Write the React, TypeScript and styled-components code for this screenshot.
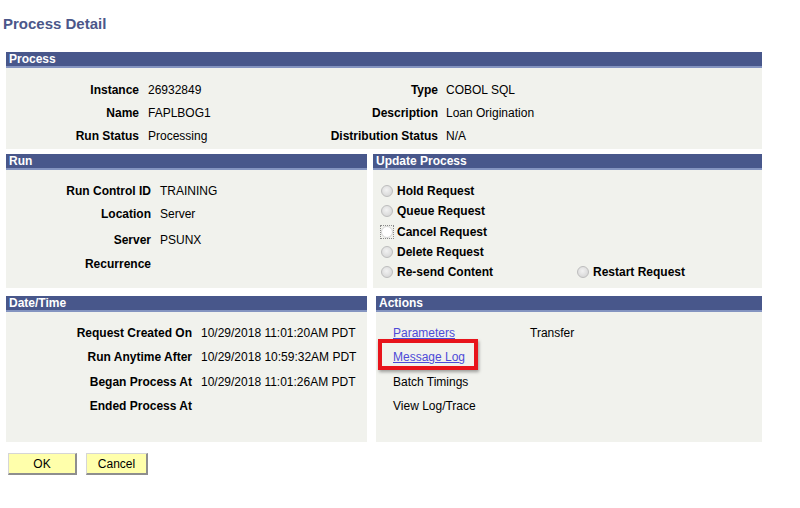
import React from 'react';
import styled, { createGlobalStyle } from 'styled-components';

const GlobalStyle = createGlobalStyle`
    html, body {
        margin: 0;
        padding: 0;
        background: #ffffff;
    }
    body {
        font-family: Arial, "Liberation Sans", sans-serif;
        font-size: 12px;
        color: #000000;
    }
`;

const Page = styled.div`
    width: 800px;
    height: 508px;
    padding-top: 15px;
    box-sizing: border-box;
`;

const Title = styled.h1`
    margin: 0 0 0 3px;
    height: 18px;
    line-height: 18px;
    font-size: 15px;
    font-weight: bold;
    color: #4b578a;
`;

const Content = styled.div`
    width: 756px;
    margin: 19px 0 0 6px;
`;

const Section = styled.section`
    display: flex;
    flex-direction: column;
    background: #f1f2ed;
`;

const Header = styled.header`
    height: 14px;
    line-height: 14px;
    padding-left: 3px;
    background: #48578b;
    border-bottom: 2px solid #8494c0;
    color: #ffffff;
    font-weight: bold;
    font-size: 12px;
`;

const Columns = styled.div<{ $gap: number }>`
    display: grid;
    grid-template-columns: 361px 1fr;
    column-gap: ${p => p.$gap}px;
    margin-top: ${p => p.$gap === 6 ? 5 : 8}px;
`;

const Body = styled.div<{ $height: number; $pt: number; $pl?: number }>`
    height: ${p => p.$height}px;
    padding: ${p => p.$pt}px 0 0 ${p => p.$pl ?? 0}px;
    box-sizing: border-box;
`;

const ProcessGrid = styled.div`
    display: grid;
    grid-template-columns: 133px 150px 149px 1fr;
    grid-auto-rows: 23px;
    align-items: center;
`;

const Label = styled.span<{ $width?: number }>`
    ${p => p.$width ? `width: ${p.$width}px; flex: none;` : ''}
    text-align: right;
    font-weight: bold;
    white-space: nowrap;
`;

const Value = styled.span<{ $pad?: number }>`
    padding-left: ${p => p.$pad ?? 9}px;
    white-space: nowrap;
`;

const Row = styled.div<{ $h: number; $mt?: number }>`
    display: flex;
    align-items: center;
    height: ${p => p.$h}px;
    margin-top: ${p => p.$mt ?? 0}px;
`;

const RadioGrid = styled.div`
    display: grid;
    grid-template-columns: 196px 1fr;
    grid-auto-rows: 20.25px;
    align-items: center;
`;

const RadioItem = styled.label<{ $span?: boolean }>`
    display: flex;
    align-items: center;
    ${p => p.$span ? 'grid-column: 1 / span 2;' : ''}
    font-weight: bold;
    white-space: nowrap;
`;

const Radio = styled.span<{ $focus?: boolean }>`
    position: relative;
    width: 12px;
    height: 12px;
    margin-right: 4px;
    border-radius: 50%;
    box-sizing: border-box;
    border: 1px solid ${p => p.$focus ? '#d4d4d4' : '#bdbdbd'};
    background: ${p => p.$focus
        ? '#ffffff'
        : 'radial-gradient(circle at 45% 40%, #f2f2f2 0%, #dadada 70%, #cdcdcd 100%)'};
    ${p => p.$focus ? `
        &::after {
            content: '';
            position: absolute;
            left: -2px;
            top: -2px;
            right: -2px;
            bottom: -2px;
            border: 1px dotted #8a8a8a;
        }
    ` : ''}
`;

const ActionRow = styled.div`
    display: grid;
    grid-template-columns: 137px 1fr;
    height: 24.3px;
    align-items: center;
`;

const Link = styled.a`
    color: #4d4ad8;
    text-decoration: underline;
    cursor: pointer;
`;

const Highlight = styled.span`
    position: relative;
    display: inline-block;
    height: 24px;
    line-height: 24px;
    &::after {
        content: '';
        position: absolute;
        left: -15px;
        right: -13px;
        top: -6px;
        bottom: -1px;
        border: 4px solid #e8141b;
        box-shadow: 1px 2px 3px rgba(0, 0, 0, 0.35);
        pointer-events: none;
    }
`;

const Buttons = styled.div`
    display: flex;
    gap: 9px;
    margin: 11px 0 0 8px;
`;

const Button = styled.button<{ $width: number }>`
    width: ${p => p.$width}px;
    height: 22px;
    padding: 0;
    background: #ffffab;
    border: 1px solid #d6d6d6;
    border-right: 2px solid #8e8e8e;
    border-bottom: 2px solid #8e8e8e;
    font-family: Arial, "Liberation Sans", sans-serif;
    font-size: 12px;
    color: #000000;
`;

const processRows = [
    ['Instance', '26932849', 'Type', 'COBOL SQL'],
    ['Name', 'FAPLBOG1', 'Description', 'Loan Origination'],
    ['Run Status', 'Processing', 'Distribution Status', 'N/A'],
];

const runRows = [
    { label: 'Run Control ID', value: 'TRAINING', mt: 0 },
    { label: 'Location', value: 'Server', mt: 0 },
    { label: 'Server', value: 'PSUNX', mt: 3 },
    { label: 'Recurrence', value: '', mt: 1 },
];

const dateRows = [
    ['Request Created On', '10/29/2018 11:01:20AM PDT'],
    ['Run Anytime After', '10/29/2018 10:59:32AM PDT'],
    ['Began Process At', '10/29/2018 11:01:26AM PDT'],
    ['Ended Process At', ''],
];

export default function App(): JSX.Element {
    return (
        <>
            <GlobalStyle />
            <Page>
                <Title>Process Detail</Title>
                <Content>
                    <Section>
                        <Header>Process</Header>
                        <Body $height={81} $pt={10}>
                            <ProcessGrid>
                                {processRows.map(([l1, v1, l2, v2]) => (
                                    <React.Fragment key={l1}>
                                        <Label>{l1}</Label>
                                        <Value>{v1}</Value>
                                        <Label>{l2}</Label>
                                        <Value $pad={8}>{v2}</Value>
                                    </React.Fragment>
                                ))}
                            </ProcessGrid>
                        </Body>
                    </Section>

                    <Columns $gap={6}>
                        <Section>
                            <Header>Run</Header>
                            <Body $height={118} $pt={9}>
                                {runRows.map(r => (
                                    <Row key={r.label} $h={23} $mt={r.mt}>
                                        <Label $width={145}>{r.label}</Label>
                                        <Value>{r.value}</Value>
                                    </Row>
                                ))}
                            </Body>
                        </Section>
                        <Section>
                            <Header>Update Process</Header>
                            <Body $height={118} $pt={11} $pl={8}>
                                <RadioGrid>
                                    <RadioItem $span><Radio />Hold Request</RadioItem>
                                    <RadioItem $span><Radio />Queue Request</RadioItem>
                                    <RadioItem $span><Radio $focus />Cancel Request</RadioItem>
                                    <RadioItem $span><Radio />Delete Request</RadioItem>
                                    <RadioItem><Radio />Re-send Content</RadioItem>
                                    <RadioItem><Radio />Restart Request</RadioItem>
                                </RadioGrid>
                            </Body>
                        </Section>
                    </Columns>

                    <Columns $gap={9}>
                        <Section>
                            <Header>Date/Time</Header>
                            <Body $height={130} $pt={9}>
                                {dateRows.map(([label, value]) => (
                                    <Row key={label} $h={24.3}>
                                        <Label $width={186}>{label}</Label>
                                        <Value>{value}</Value>
                                    </Row>
                                ))}
                            </Body>
                        </Section>
                        <Section>
                            <Header>Actions</Header>
                            <Body $height={130} $pt={9} $pl={17}>
                                <ActionRow>
                                    <span><Link>Parameters</Link></span>
                                    <span>Transfer</span>
                                </ActionRow>
                                <ActionRow>
                                    <span>
                                        <Highlight><Link>Message Log</Link></Highlight>
                                    </span>
                                </ActionRow>
                                <ActionRow>
                                    <span>Batch Timings</span>
                                </ActionRow>
                                <ActionRow>
                                    <span>View Log/Trace</span>
                                </ActionRow>
                            </Body>
                        </Section>
                    </Columns>
                </Content>
                <Buttons>
                    <Button $width={69}>OK</Button>
                    <Button $width={62}>Cancel</Button>
                </Buttons>
            </Page>
        </>
    );
}
